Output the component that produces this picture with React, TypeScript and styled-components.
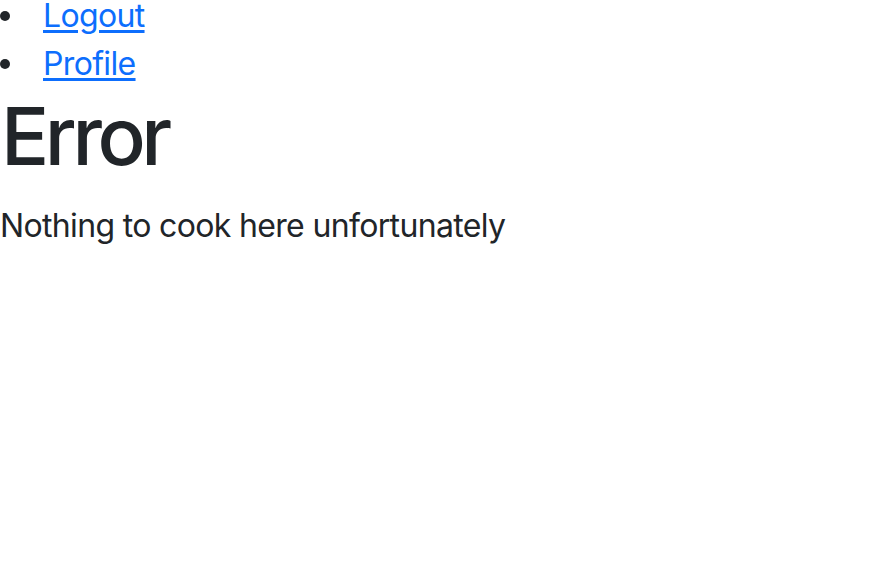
import React from "react";
import styled, { createGlobalStyle } from "styled-components";

const Global = createGlobalStyle`
  html, body { margin: 0; padding: 0; background: #fff; }
  body {
    font-family: Inter, "Noto Sans", "Liberation Sans", sans-serif;
    font-size: 32px;
    line-height: 1.5;
    letter-spacing: -0.66px;
    color: #212529;
    overflow: hidden;
  }
`;

const Page = styled.div`
  margin-top: -8px;
`;

const NavList = styled.ul`
  margin: 0;
  padding: 0;
  list-style: none;
`;

const NavItem = styled.li`
  display: flex;
  align-items: center;
  line-height: 48px;

  &::before {
    content: "";
    flex: none;
    width: 10px;
    height: 10px;
    margin-right: 33px;
    border-radius: 50%;
    background: #212529;
  }
`;

const NavLink = styled.a`
  color: #0d6efd;
  text-decoration: underline;
  text-underline-offset: 3px;
`;

const Title = styled.h1`
  margin: 0 0 16px;
  font-size: 80px;
  font-weight: 500;
  line-height: 1.2;
  letter-spacing: -4.4px;
  padding-left: 1px;
`;

const Message = styled.p`
  margin: 0 0 32px;
  padding-top: 2px;
`;

export default function App() {
  return (
    <>
      <Global />
      <Page>
        <NavList>
          <NavItem>
            <NavLink href="#">Logout</NavLink>
          </NavItem>
          <NavItem>
            <NavLink href="#">Profile</NavLink>
          </NavItem>
        </NavList>
        <Title>Error</Title>
        <Message>Nothing to cook here unfortunately</Message>
      </Page>
    </>
  );
}
